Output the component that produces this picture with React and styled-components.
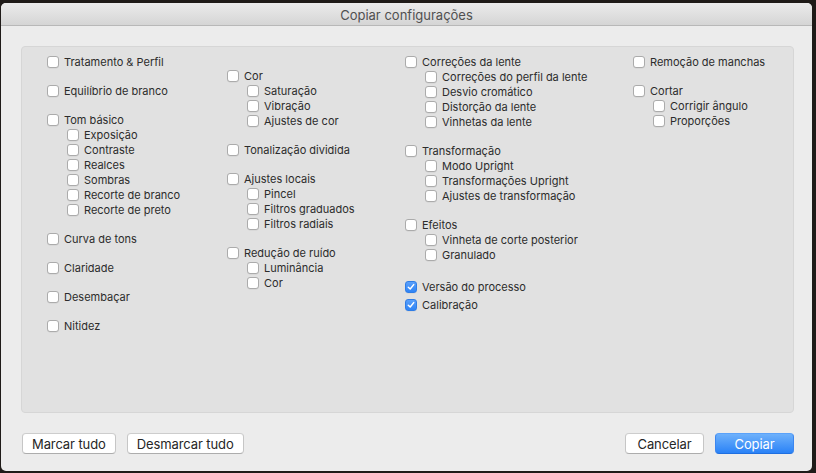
import React from 'react'
import styled, { createGlobalStyle } from 'styled-components'

const GlobalStyle = createGlobalStyle`
  html, body {
    margin: 0;
    padding: 0;
    background: #1f1b18;
  }
  body {
    font-family: "Inter", "Noto Sans", "Liberation Sans", sans-serif;
    -webkit-font-smoothing: antialiased;
  }
`

const columns = [
  {
    offset: 0,
    groups: [
      { label: 'Tratamento & Perfil' },
      { label: 'Equilíbrio de branco' },
      { label: 'Tom básico', items: ['Exposição', 'Contraste', 'Realces', 'Sombras', 'Recorte de branco', 'Recorte de preto'] },
      { label: 'Curva de tons' },
      { label: 'Claridade' },
      { label: 'Desembaçar' },
      { label: 'Nitidez' },
    ],
  },
  {
    offset: 14,
    groups: [
      { label: 'Cor', items: ['Saturação', 'Vibração', 'Ajustes de cor'] },
      { label: 'Tonalização dividida' },
      { label: 'Ajustes locais', items: ['Pincel', 'Filtros graduados', 'Filtros radiais'] },
      { label: 'Redução de ruído', items: ['Luminância', 'Cor'] },
    ],
  },
  {
    offset: 0,
    groups: [
      { label: 'Correções da lente', items: ['Correções do perfil da lente', 'Desvio cromático', 'Distorção da lente', 'Vinhetas da lente'] },
      { label: 'Transformação', items: ['Modo Upright', 'Transformações Upright', 'Ajustes de transformação'] },
      { label: 'Efeitos', items: ['Vinheta de corte posterior', 'Granulado'] },
      { label: 'Versão do processo', checked: true, gap: 17 },
      { label: 'Calibração', checked: true, gap: 3 },
    ],
  },
  {
    offset: 0,
    groups: [
      { label: 'Remoção de manchas' },
      { label: 'Cortar', items: ['Corrigir ângulo', 'Proporções'] },
    ],
  },
]

const Window = styled.div`
  margin: 3px 0 0 1px;
  width: 811px;
  height: 468px;
  background: #ececec;
  border-radius: 5px;
  overflow: hidden;
  display: flex;
  flex-direction: column;
`

const TitleBar = styled.div`
  height: 21px;
  flex: none;
  background: linear-gradient(#ebebeb, #d5d5d5);
  border-bottom: 1px solid #b8b8b8;
  display: flex;
  align-items: center;
  justify-content: center;
  font-size: 13px;
  color: #505050;
  padding-top: 1px;
`

const Content = styled.div`
  flex: 1;
  padding: 20px 18px 0 20px;
  display: flex;
  flex-direction: column;
`

const Panel = styled.div`
  background: #e1e1e1;
  border: 1px solid #d6d6d6;
  border-radius: 4px;
  display: grid;
  grid-template-columns: 180px 178px 228px 1fr;
  padding: 7px 0 0 25px;
  box-sizing: border-box;
  height: 367px;
`

const Column = styled.div`
  display: flex;
  flex-direction: column;
  gap: 14px;
  padding-top: ${p => p.$offset}px;
`

const Group = styled.div`
  display: flex;
  flex-direction: column;
  margin-top: ${p => (p.$gap != null ? p.$gap - 14 : 0)}px;
`

const Row = styled.label`
  display: flex;
  align-items: center;
  height: 15px;
  gap: 5px;
  padding-left: ${p => (p.$sub ? 20 : 0)}px;
  font-size: 11px;
  color: #2c2c2c;
  white-space: nowrap;
`

const Box = styled.span`
  width: 12px;
  height: 12px;
  box-sizing: border-box;
  border-radius: 3px;
  flex: none;
  display: flex;
  align-items: center;
  justify-content: center;
  background: ${p => (p.$checked ? 'linear-gradient(#5aa0fb, #2f84f6)' : '#fff')};
  border: 1px solid ${p => (p.$checked ? '#2f7de6' : '#ababab')};
  box-shadow: 0 0.5px 0.5px rgba(0, 0, 0, 0.08);
`

const Footer = styled.div`
  display: flex;
  justify-content: space-between;
  margin-top: 20px;
  padding-left: 1px;
`

const ButtonGroup = styled.div`
  display: flex;
  gap: 11px;
`

const Button = styled.button`
  height: 21px;
  min-width: 79px;
  padding: 0 9px;
  box-sizing: border-box;
  border-radius: 4px;
  font-family: inherit;
  font-size: 13px;
  letter-spacing: -0.1px;
  display: flex;
  align-items: center;
  justify-content: center;
  border: 1px solid ${p => (p.$primary ? '#3c86ef' : '#c6c6c6')};
  border-top-color: ${p => (p.$primary ? '#5aa2fa' : '#cdcdcd')};
  border-bottom-color: ${p => (p.$primary ? '#1f6fe0' : '#adadad')};
  background: ${p => (p.$primary ? 'linear-gradient(#6eb1fb, #2a82f7)' : '#fff')};
  color: ${p => (p.$primary ? '#fff' : '#262626')};
`

const Check = () => (
  <svg width="8" height="8" viewBox="0 0 8 8">
    <path d="M1.3 4.2 L3.2 6 L6.7 1.6" fill="none" stroke="#fff" strokeWidth="1.5" strokeLinecap="round" strokeLinejoin="round" />
  </svg>
)

const Option = ({ label, checked, sub }) => (
  <Row $sub={sub}>
    <Box $checked={checked}>{checked && <Check />}</Box>
    {label}
  </Row>
)

export default function App() {
  return (
    <>
      <GlobalStyle />
      <Window>
        <TitleBar>Copiar configurações</TitleBar>
        <Content>
          <Panel>
            {columns.map((col, i) => (
              <Column key={i} $offset={col.offset}>
                {col.groups.map(g => (
                  <Group key={g.label} $gap={g.gap}>
                    <Option label={g.label} checked={g.checked} />
                    {(g.items || []).map(item => (
                      <Option key={item} label={item} sub />
                    ))}
                  </Group>
                ))}
              </Column>
            ))}
          </Panel>
          <Footer>
            <ButtonGroup>
              <Button>Marcar tudo</Button>
              <Button>Desmarcar tudo</Button>
            </ButtonGroup>
            <ButtonGroup>
              <Button>Cancelar</Button>
              <Button $primary>Copiar</Button>
            </ButtonGroup>
          </Footer>
        </Content>
      </Window>
    </>
  )
}
